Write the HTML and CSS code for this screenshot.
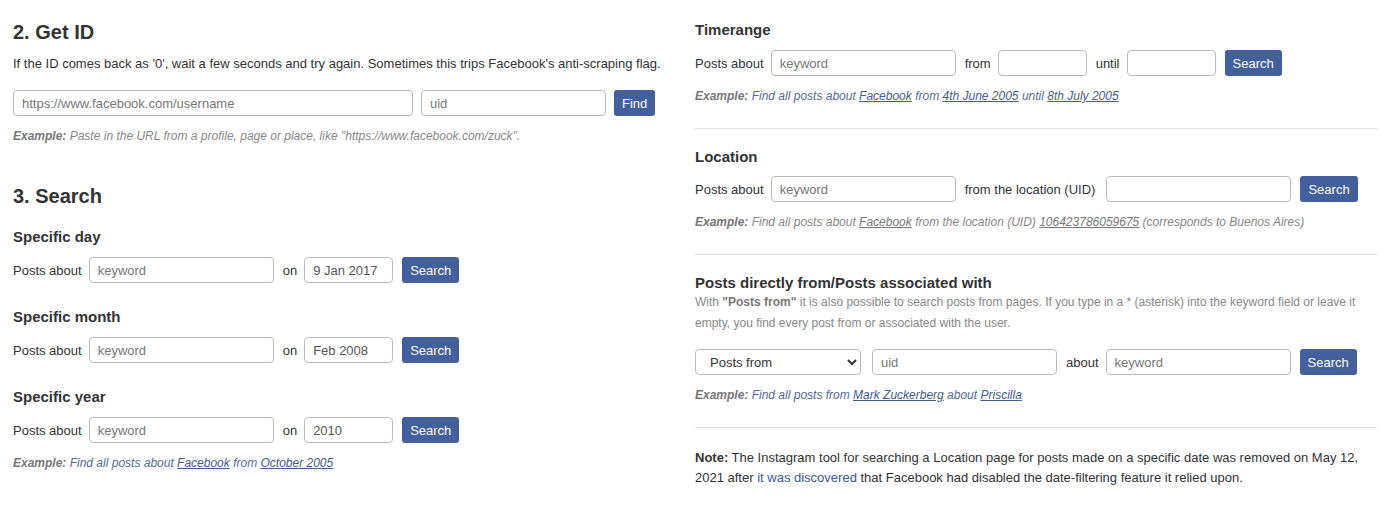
FILE: index.html
```html
<!DOCTYPE html>
<html>
<head>
<meta charset="utf-8">
<link rel="stylesheet" href="styles.css">
</head>
<body>
<div class="page">
  <div class="col left">
    <h2 class="h2 first">2. Get ID</h2>
    <p class="lead">If the ID comes back as '0', wait a few seconds and try again. Sometimes this trips Facebook's anti-scraping flag.</p>
    <div class="row">
      <input class="inp w-url" placeholder="https://www.facebook.com/username">
      <input class="inp w-uid" placeholder="uid">
      <button class="btn">Find</button>
    </div>
    <p class="example"><b>Example:</b> Paste in the URL from a profile, page or place, like "https://www.facebook.com/zuck".</p>

    <h2 class="h2 second">3. Search</h2>
    <h4 class="h4 sub">Specific day</h4>
    <div class="row">
      <span class="lbl">Posts about</span>
      <input class="inp w-kw" placeholder="keyword">
      <span class="lbl">on</span>
      <input class="inp w-date" value="9 Jan 2017">
      <button class="btn">Search</button>
    </div>
    <h4 class="h4">Specific month</h4>
    <div class="row">
      <span class="lbl">Posts about</span>
      <input class="inp w-kw" placeholder="keyword">
      <span class="lbl">on</span>
      <input class="inp w-date" value="Feb 2008">
      <button class="btn">Search</button>
    </div>
    <h4 class="h4">Specific year</h4>
    <div class="row">
      <span class="lbl">Posts about</span>
      <input class="inp w-kw" placeholder="keyword">
      <span class="lbl">on</span>
      <input class="inp w-date" value="2010">
      <button class="btn">Search</button>
    </div>
    <p class="example link-ex"><b>Example:</b> Find all posts about <a href="#">Facebook</a> from <a href="#">October 2005</a></p>
  </div>

  <div class="col right">
    <section class="sec">
      <h4 class="h4 top">Timerange</h4>
      <div class="row">
        <span class="lbl">Posts about</span>
        <input class="inp w-kw" placeholder="keyword">
        <span class="lbl">from</span>
        <input class="inp w-date">
        <span class="lbl">until</span>
        <input class="inp w-date">
        <button class="btn">Search</button>
      </div>
      <p class="example link-ex"><b>Example:</b> Find all posts about <a href="#">Facebook</a> from <a href="#">4th June 2005</a> until <a href="#">8th July 2005</a></p>
    </section>
    <hr class="rule">
    <section class="sec">
      <h4 class="h4 after-rule loc">Location</h4>
      <div class="row">
        <span class="lbl">Posts about</span>
        <input class="inp w-kw" placeholder="keyword">
        <span class="lbl wide">from the location (UID)</span>
        <input class="inp w-kw">
        <button class="btn">Search</button>
      </div>
      <p class="example"><b>Example:</b> Find all posts about <a href="#">Facebook</a> from the location (UID) <a href="#">106423786059675</a> (corresponds to Buenos Aires)</p>
    </section>
    <hr class="rule">
    <section class="sec">
      <h4 class="h4 after-rule tight">Posts directly from/Posts associated with</h4>
      <p class="desc">With <strong class="em">"Posts from"</strong> it is also possible to search posts from pages. If you type in a * (asterisk) into the keyword field or leave it empty, you find every post from or associated with the user.</p>
      <div class="row">
        <select class="inp sel"><option>Posts from</option><option>Posts associated with</option></select>
        <input class="inp w-kw" placeholder="uid">
        <span class="lbl">about</span>
        <input class="inp w-kw" placeholder="keyword">
        <button class="btn">Search</button>
      </div>
      <p class="example link-ex"><b>Example:</b> Find all posts from <a href="#">Mark Zuckerberg</a> about <a href="#">Priscilla</a></p>
    </section>
    <hr class="rule">
    <p class="note"><strong>Note:</strong> The Instagram tool for searching a Location page for posts made on a specific date was removed on May 12, 2021 after <a href="#" class="blue">it was discovered</a> that Facebook had disabled the date-filtering feature it relied upon.</p>
  </div>
</div>
</body>
</html>
```

FILE: styles.css
```css
* { box-sizing: border-box; }
html, body { margin: 0; padding: 0; background: #fff; }
body {
  font-family: "Liberation Sans", Arial, sans-serif;
  font-size: 13px;
  color: #333;
}
.page {
  display: grid;
  grid-template-columns: 652px 682px;
  column-gap: 30px;
  padding: 0 16px 0 13px;
}
.col { min-width: 0; }
.h2 {
  font-size: 20px;
  font-weight: bold;
  margin: 0;
  line-height: 24px;
  color: #333;
}
.h2.first { margin-top: 20px; }
.h2.second { margin-top: 40px; }
.lead { margin: 11px 0 0; line-height: 18px; }
.row {
  display: flex;
  align-items: center;
  height: 26px;
}
.row > .inp, .row > .btn { margin-right: 9px; }
.row > .lbl { margin-right: 7px; white-space: nowrap; }
.row > .lbl.wide { margin-right: 11px; }
.row > .sel { margin-right: 11px; }
.row > *:last-child { margin-right: 0; }
.row > .w-url { margin-right: 8px; }
.row > .w-uid { margin-right: 8px; }
.lead + .row { margin-top: 17px; }
.inp {
  height: 26px;
  border: 1px solid #bbb;
  border-radius: 4px;
  padding: 0 8px;
  font-family: "Liberation Sans", Arial, sans-serif;
  font-size: 13px;
  color: #555;
  background: #fff;
  outline: none;
}
.inp::placeholder { color: #777; }
.w-url { width: 400px; }
.w-uid { width: 185px; }
.w-kw { width: 185px; }
.w-date { width: 89px; }
.sel {
  width: 166px;
  padding: 0 6px 0 10px;
  color: #333;
}
.btn {
  height: 26px;
  padding: 0 8px;
  background: #43609c;
  color: #fff;
  border: none;
  border-radius: 3px;
  font-family: "Liberation Sans", Arial, sans-serif;
  font-size: 13px;
}
.example {
  margin: 12px 0 0;
  font-size: 12px;
  font-style: italic;
  color: #888;
  line-height: 16px;
}
.example b { color: #777; }
.example a { color: #777; text-decoration: underline; }
.example.link-ex { color: #56689a; }
.example.link-ex a { color: #465c8a; }
.h4 {
  font-size: 15px;
  font-weight: bold;
  margin: 25px 0 11px;
  line-height: 18px;
  color: #333;
}
.h4.sub { margin-top: 20px; }
.h4.top { margin-top: 21px; }
.h4.after-rule { margin-top: 19px; }
.h4.loc { margin-bottom: 10px; }
.h4.tight { margin-bottom: 0; }
.sec { padding-bottom: 24px; }
.rule {
  border: 0;
  border-top: 1px solid #ddd;
  margin: 0;
}
.desc {
  margin: 0 0 15px;
  font-size: 12px;
  color: #888;
  line-height: 21px;
}
.desc .em { color: #777; font-weight: bold; }
.note {
  margin: 20px 0 0;
  line-height: 20px;
}
.note .blue { color: #3b5998; text-decoration: none; }
```
